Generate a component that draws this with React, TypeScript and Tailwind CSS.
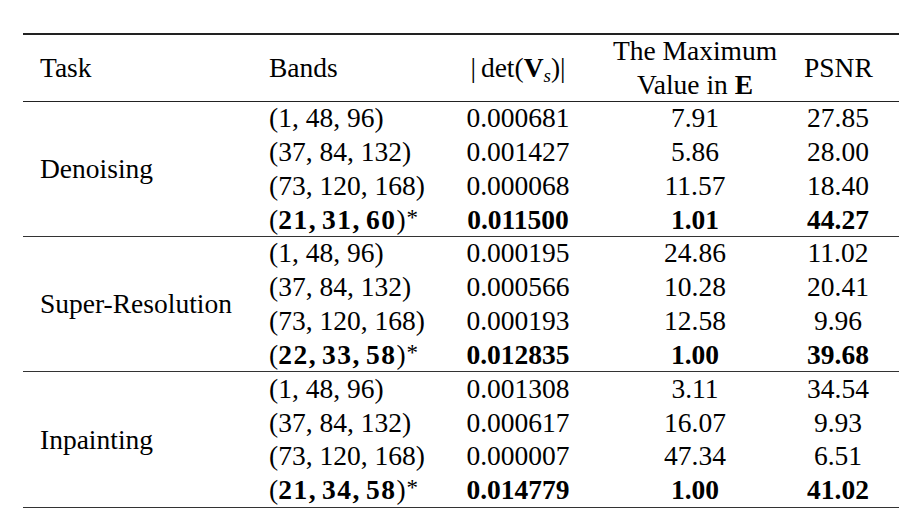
import React from 'react';

type Row = { bands: [string, string, string]; det: string; max: string; psnr: string; best?: boolean };
type Section = { task: string; rows: Row[] };

const sections: Section[] = [
  {
    task: 'Denoising',
    rows: [
      { bands: ['1', '48', '96'], det: '0.000681', max: '7.91', psnr: '27.85' },
      { bands: ['37', '84', '132'], det: '0.001427', max: '5.86', psnr: '28.00' },
      { bands: ['73', '120', '168'], det: '0.000068', max: '11.57', psnr: '18.40' },
      { bands: ['21', '31', '60'], det: '0.011500', max: '1.01', psnr: '44.27', best: true },
    ],
  },
  {
    task: 'Super-Resolution',
    rows: [
      { bands: ['1', '48', '96'], det: '0.000195', max: '24.86', psnr: '11.02' },
      { bands: ['37', '84', '132'], det: '0.000566', max: '10.28', psnr: '20.41' },
      { bands: ['73', '120', '168'], det: '0.000193', max: '12.58', psnr: '9.96' },
      { bands: ['22', '33', '58'], det: '0.012835', max: '1.00', psnr: '39.68', best: true },
    ],
  },
  {
    task: 'Inpainting',
    rows: [
      { bands: ['1', '48', '96'], det: '0.001308', max: '3.11', psnr: '34.54' },
      { bands: ['37', '84', '132'], det: '0.000617', max: '16.07', psnr: '9.93' },
      { bands: ['73', '120', '168'], det: '0.000007', max: '47.34', psnr: '6.51' },
      { bands: ['21', '34', '58'], det: '0.014779', max: '1.00', psnr: '41.02', best: true },
    ],
  },
];

// (a, b, c) — best row is typeset as bold math with a starred superscript
function Bands({ b, best }: { b: [string, string, string]; best?: boolean }) {
  if (!best) return <span>({b.join(', ')})</span>;
  return (
    <span className="inline-flex items-start">
      <span>(</span>
      <span className="font-bold tracking-[1.5px]">{b[0]},</span>
      <span className="font-bold tracking-[1.5px] ml-[5px]">{b[1]},</span>
      <span className="font-bold tracking-[1.5px] ml-[5px]">{b[2]}</span>
      <span>)</span>
      <span className="font-normal text-[23px] leading-none ml-[1px] mt-[3px]">*</span>
    </span>
  );
}

export default function App() {
  return (
    <div className="w-[924px] h-[532px] bg-white text-black pt-[33px] pl-[23px]" style={{ fontFamily: '"Liberation Serif", "Times New Roman", serif' }}>
      <div className="w-[876px] text-[27.5px] leading-[34px]">
        {/* header */}
        <div className="flex items-center h-[69px] border-t-2 border-b border-[#222]">
          <div className="w-[229px] pl-[17px]">Task</div>
          <div className="w-[198px] pl-[17px]">Bands</div>
          <div className="w-[136px] text-center whitespace-nowrap">
            |<span className="ml-[5px]">det(</span><span className="font-bold">V</span>
            <sub className="italic text-[19px]">s</sub>)|
          </div>
          <div className="w-[218px] text-center">
            <div>The Maximum</div>
            <div>Value in <span className="font-bold">E</span></div>
          </div>
          <div className="w-[68px] text-center">PSNR</div>
        </div>

        {sections.map((s, i) => (
          <div
            key={s.task}
            className={`flex h-[135px] border-b border-[#333] ${i === sections.length - 1 ? 'h-[136px]' : ''}`}
          >
            <div className="w-[229px] pl-[17px] flex items-center">{s.task}</div>
            <div className="flex-1 flex flex-col justify-center">
              {s.rows.map((r, j) => (
                <div key={j} className={`flex h-[33.75px] items-center ${r.best ? 'font-bold' : ''}`}>
                  <div className="w-[198px] pl-[17px] whitespace-nowrap font-normal">
                    <Bands b={r.bands} best={r.best} />
                  </div>
                  <div className="w-[136px] text-center">{r.det}</div>
                  <div className="w-[218px] text-center">{r.max}</div>
                  <div className="w-[68px] text-center">{r.psnr}</div>
                </div>
              ))}
            </div>
          </div>
        ))}
      </div>
    </div>
  );
}
